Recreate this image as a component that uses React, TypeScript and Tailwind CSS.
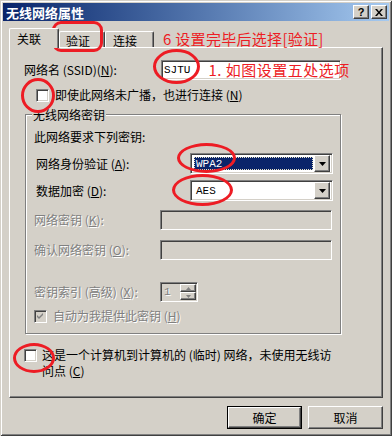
import React from 'react'

const sunken =
  'border border-t-[#808080] border-l-[#808080] border-b-white border-r-white shadow-[inset_1px_1px_0_#404040,inset_-1px_-1px_0_#d4d0c8]'
const raised =
  'border border-t-white border-l-white border-r-[#404040] border-b-[#404040] shadow-[inset_-1px_-1px_0_#808080,inset_1px_1px_0_#d4d0c8] bg-[#d4d0c8]'
const disabledText = 'text-[#808080] [text-shadow:1px_1px_0_#fff]'
const mono = "font-['Liberation_Mono',monospace] text-[11px]"

const Checkbox: React.FC<{ checked?: boolean; disabled?: boolean }> = ({ checked, disabled }) => (
  <div
    className={`flex h-[13px] w-[13px] shrink-0 items-center justify-center ${sunken} ${
      disabled ? 'bg-[#d4d0c8]' : 'bg-white'
    }`}
  >
    {checked && (
      <svg width="7" height="7" viewBox="0 0 7 7">
        <path d="M0 2 L2 4 L6 0 L6 2 L2 6 L0 4 Z" fill={disabled ? '#808080' : '#000'} />
      </svg>
    )}
  </div>
)

const DropArrow = () => (
  <div className={`flex h-[17px] w-[16px] items-center justify-center ${raised}`}>
    <svg width="7" height="4" viewBox="0 0 7 4">
      <path d="M0 0 H7 L3.5 4 Z" fill="#000" />
    </svg>
  </div>
)

const Combo: React.FC<{ value: string; selected?: boolean }> = ({ value, selected }) => (
  <div className={`flex h-[21px] w-[143px] items-center bg-white p-[2px] ${sunken}`}>
    <div className="flex h-full flex-1 items-center p-[1px]">
      {selected ? (
        <div className="flex h-full w-full items-center border border-dotted border-[#e8e4c8] bg-[#0a246a] pl-[1px]">
          <span className={`${mono} text-white`}>{value}</span>
        </div>
      ) : (
        <span className={`${mono} pl-[2px]`}>{value}</span>
      )}
    </div>
    <DropArrow />
  </div>
)

const Button: React.FC<{ label: string; primary?: boolean }> = ({ label, primary }) => (
  <div className={`h-[23px] w-[75px] ${primary ? 'border border-black' : ''}`}>
    <div className={`flex h-full w-full items-center justify-center ${raised}`}>
      <span className="leading-none">{label}</span>
    </div>
  </div>
)

const Ring: React.FC<{ className: string }> = ({ className }) => (
  <div className={`pointer-events-none absolute border-[3px] border-[#ed1c24] ${className}`} />
)

const App: React.FC = () => {
  return (
    <div className="relative h-[436px] w-[392px] overflow-hidden bg-[#d4d0c8] p-[3px] font-['Noto_Sans_CJK_SC',sans-serif] text-[12px] leading-[14px] text-black shadow-[inset_1px_1px_0_#d4d0c8,inset_-1px_-1px_0_#404040,inset_2px_2px_0_#fff,inset_-2px_-2px_0_#808080]">
      {/* title bar */}
      <div className="flex h-[18px] items-center justify-between bg-gradient-to-r from-[#0a246a] to-[#a6caf0] pl-[3px] pr-[2px]">
        <span className="text-[13px] font-bold leading-none text-white">无线网络属性</span>
        <div className="flex gap-[2px]">
          <div className={`flex h-[14px] w-[16px] items-center justify-center ${raised}`}>
            <span className="font-['Liberation_Sans',sans-serif] text-[11px] font-bold leading-none">?</span>
          </div>
          <div className={`flex h-[14px] w-[16px] items-center justify-center ${raised}`}>
            <svg width="8" height="7" viewBox="0 0 8 7">
              <path d="M0 0 H2 L4 2.5 L6 0 H8 L5 3.5 L8 7 H6 L4 4.5 L2 7 H0 L3 3.5 Z" fill="#000" />
            </svg>
          </div>
        </div>
      </div>

      <div className="px-[6px] pt-[7px]">
        {/* tabs */}
        <div className="flex h-[19px] items-end">
          <div className="relative z-10 -mb-[1px] flex h-[20px] w-[50px] items-start rounded-t-[2px] border-l border-t border-r border-l-white border-t-white border-r-[#404040] bg-[#d4d0c8] pl-[7px] pt-[3px] shadow-[inset_-1px_0_0_#808080]">
            <span>关联</span>
          </div>
          <div className="flex h-[16px] w-[46px] items-start rounded-t-[2px] border-l border-t border-r border-l-white border-t-white border-r-[#404040] pl-[6px] pt-[2px] shadow-[inset_-1px_0_0_#808080]">
            <span>验证</span>
          </div>
          <div className="flex h-[16px] w-[49px] items-start rounded-t-[2px] border-l border-t border-r border-l-white border-t-white border-r-[#404040] pl-[7px] pt-[2px] shadow-[inset_-1px_0_0_#808080]">
            <span>连接</span>
          </div>
          <span className="ml-[9px] whitespace-nowrap text-[15px] leading-[16px] tracking-[0.3px] text-[#ed1c24]">
            6 设置完毕后选择[验证]
          </span>
        </div>

        {/* panel */}
        <div className="flex h-[351px] w-[374px] flex-col border border-t-white border-l-white border-r-[#404040] border-b-[#404040] pl-[14px] shadow-[inset_-1px_-1px_0_#808080]">
          <div className="mt-[12px] flex h-[20px] items-center">
            <span className="w-[137px]">
              网络名 (SSID)(<u>N</u>):
            </span>
            <div className={`flex h-[20px] w-[180px] items-center bg-white pl-[2px] ${sunken}`}>
              <span className={mono}>SJTU</span>
              <span className="ml-[18px] whitespace-nowrap text-[15px] leading-[16px] tracking-[0.5px] text-[#ed1c24]">
                1. 如图设置五处选项
              </span>
            </div>
          </div>

          <div className="mt-[6px] flex h-[18px] items-center pl-[12px]">
            <Checkbox />
            <span className="ml-[6px]">
              即使此网络未广播，也进行连接 (<u>N</u>)
            </span>
          </div>

          {/* group box */}
          <div className="ml-[1px] mt-[10px] flex h-[220px] w-[316px] flex-col border border-[#808080] pl-[8px] shadow-[inset_1px_1px_0_#fff,1px_1px_0_#fff]">
            <span className="-ml-[2px] -mt-[8px] self-start bg-[#d4d0c8] px-[1px] leading-[16px]">无线网络密钥</span>
            <span className="mt-[7px]">此网络要求下列密钥:</span>

            <div className="mt-[9px] flex h-[21px] items-center">
              <span className="w-[156px] pl-[2px]">
                网络身份验证 (<u>A</u>):
              </span>
              <Combo value="WPA2" selected />
            </div>
            <div className="mt-[6px] flex h-[21px] items-center">
              <span className="w-[156px] pl-[2px]">
                数据加密 (<u>D</u>):
              </span>
              <Combo value="AES" />
            </div>

            <div className="mt-[9px] flex h-[20px] items-center">
              <span className={`w-[126px] ${disabledText}`}>
                网络密钥 (<u>K</u>):
              </span>
              <div className={`h-[20px] w-[172px] bg-[#d4d0c8] ${sunken}`} />
            </div>
            <div className="mt-[10px] flex h-[20px] items-center">
              <span className={`w-[126px] ${disabledText}`}>
                确认网络密钥 (<u>O</u>):
              </span>
              <div className={`h-[20px] w-[172px] bg-[#d4d0c8] ${sunken}`} />
            </div>

            <div className="mt-[22px] flex h-[20px] items-center">
              <span className={`w-[126px] ${disabledText}`}>
                密钥索引 (高级) (<u>X</u>):
              </span>
              <div className={`flex h-[20px] w-[38px] items-center justify-between bg-[#d4d0c8] pl-[3px] pr-[1px] ${sunken}`}>
                <span className={`${mono} ${disabledText}`}>1</span>
                <div className="flex flex-col">
                  <div className={`flex h-[8px] w-[16px] items-center justify-center ${raised}`}>
                    <svg width="5" height="3" viewBox="0 0 5 3">
                      <path d="M0 3 H5 L2.5 0 Z" fill="#808080" />
                    </svg>
                  </div>
                  <div className={`flex h-[8px] w-[16px] items-center justify-center ${raised}`}>
                    <svg width="5" height="3" viewBox="0 0 5 3">
                      <path d="M0 0 H5 L2.5 3 Z" fill="#808080" />
                    </svg>
                  </div>
                </div>
              </div>
            </div>

            <div className="mt-[7px] flex h-[14px] items-center">
              <Checkbox checked disabled />
              <span className={`ml-[6px] ${disabledText}`}>
                自动为我提供此密钥 (<u>H</u>)
              </span>
            </div>
          </div>

          <div className="mt-[13px] flex items-start">
            <div className="mt-[2px]">
              <Checkbox />
            </div>
            <span className="ml-[5px] leading-[16px]">
              这是一个计算机到计算机的 (临时) 网络，未使用无线访
              <br />
              问点 (<u>C</u>)
            </span>
          </div>
        </div>

        {/* buttons */}
        <div className="mt-[8px] flex justify-end gap-[6px]">
          <Button label="确定" primary />
          <Button label="取消" />
        </div>
      </div>

      {/* red annotations */}
      <Ring className="left-[52px] top-[21px] h-[31px] w-[51px] rounded-[9px]" />
      <Ring className="left-[153px] top-[49px] h-[35px] w-[47px] rounded-[50%]" />
      <Ring className="left-[21px] top-[78px] h-[35px] w-[34px] rounded-[50%]" />
      <Ring className="left-[177px] top-[143px] h-[30px] w-[59px] rounded-[50%]" />
      <Ring className="left-[172px] top-[174px] h-[32px] w-[61px] rounded-[50%]" />
      <Ring className="left-[13px] top-[343px] h-[30px] w-[42px] rounded-[50%]" />
    </div>
  )
}

export default App
